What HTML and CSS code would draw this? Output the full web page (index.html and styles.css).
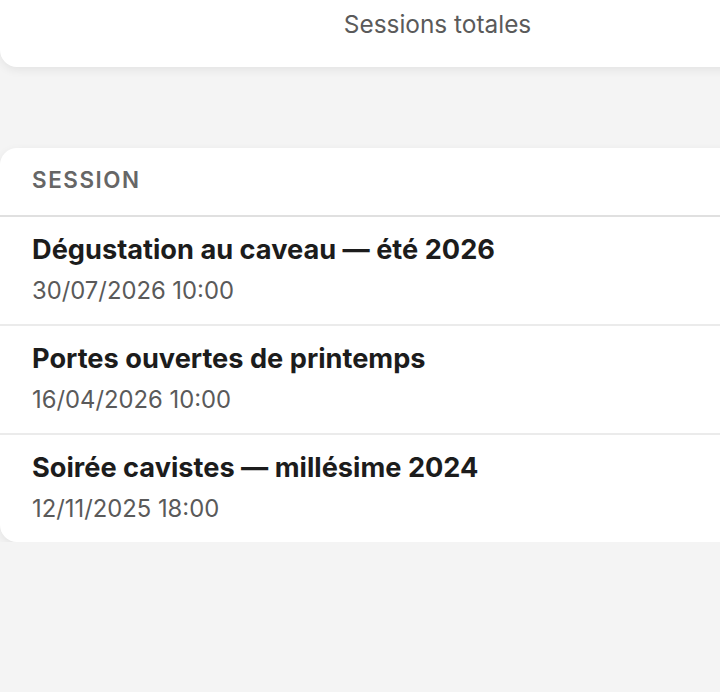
FILE: index.html
```html
<!DOCTYPE html>
<html lang="fr">
<head>
    <meta charset="UTF-8">
    <meta name="viewport" content="width=device-width, initial-scale=1.0">
    <title>Sessions</title>
    <link rel="stylesheet" href="styles.css">
</head>
<body>
    <main class="page">
        <section class="stat-card">
            <p class="stat-label">Sessions totales</p>
        </section>

        <section class="table-card">
            <div class="table-head">Session</div>
            <ul class="session-list">
                <li class="session-row">
                    <div class="session-title">Dégustation au caveau — été 2026</div>
                    <div class="session-date">30/07/2026 10:00</div>
                </li>
                <li class="session-row">
                    <div class="session-title">Portes ouvertes de printemps</div>
                    <div class="session-date">16/04/2026 10:00</div>
                </li>
                <li class="session-row">
                    <div class="session-title">Soirée cavistes — millésime 2024</div>
                    <div class="session-date">12/11/2025 18:00</div>
                </li>
            </ul>
        </section>
    </main>
</body>
</html>
```

FILE: styles.css
```css
:root {
    --bg: #f4f4f4;
    --card: #ffffff;
    --text: #1c1c1c;
    --muted: #5a5a5a;
    --line: #e0e0e0;
    --line-soft: #ebebeb;
}

* {
    margin: 0;
    padding: 0;
    box-sizing: border-box;
}

html,
body {
    overflow: hidden;
}

body {
    font-family: Inter, "Noto Sans", sans-serif;
    background-color: var(--bg);
    color: var(--text);
}

.page {
    width: 875px;
    display: flex;
    flex-direction: column;
    gap: 81px;
}

.stat-card {
    background: var(--card);
    border-radius: 0 0 17px 17px;
    box-shadow: 0 3px 10px rgba(0, 0, 0, 0.07);
    padding: 8px 32px 27px;
    text-align: center;
}

.stat-label {
    font-size: 24.4px;
    line-height: 32px;
    color: var(--muted);
}

.table-card {
    background: var(--card);
    border-radius: 17px;
    box-shadow: 0 3px 10px rgba(0, 0, 0, 0.07);
    overflow: hidden;
}

.table-head {
    padding: 0 32px 4px;
    height: 69px;
    display: flex;
    align-items: center;
    border-bottom: 2px solid var(--line);
    font-size: 22.4px;
    font-weight: 600;
    letter-spacing: 0.07em;
    text-transform: uppercase;
    color: #666666;
}

.session-list {
    list-style: none;
}

.session-row {
    padding: 15px 32px 14px;
    display: flex;
    flex-direction: column;
    gap: 4px;
}

.session-row + .session-row {
    border-top: 2px solid var(--line-soft);
}

.session-title {
    font-size: 27.2px;
    line-height: 36px;
    font-weight: 700;
}

.session-date {
    font-size: 23.8px;
    line-height: 38px;
    color: var(--muted);
}
```
